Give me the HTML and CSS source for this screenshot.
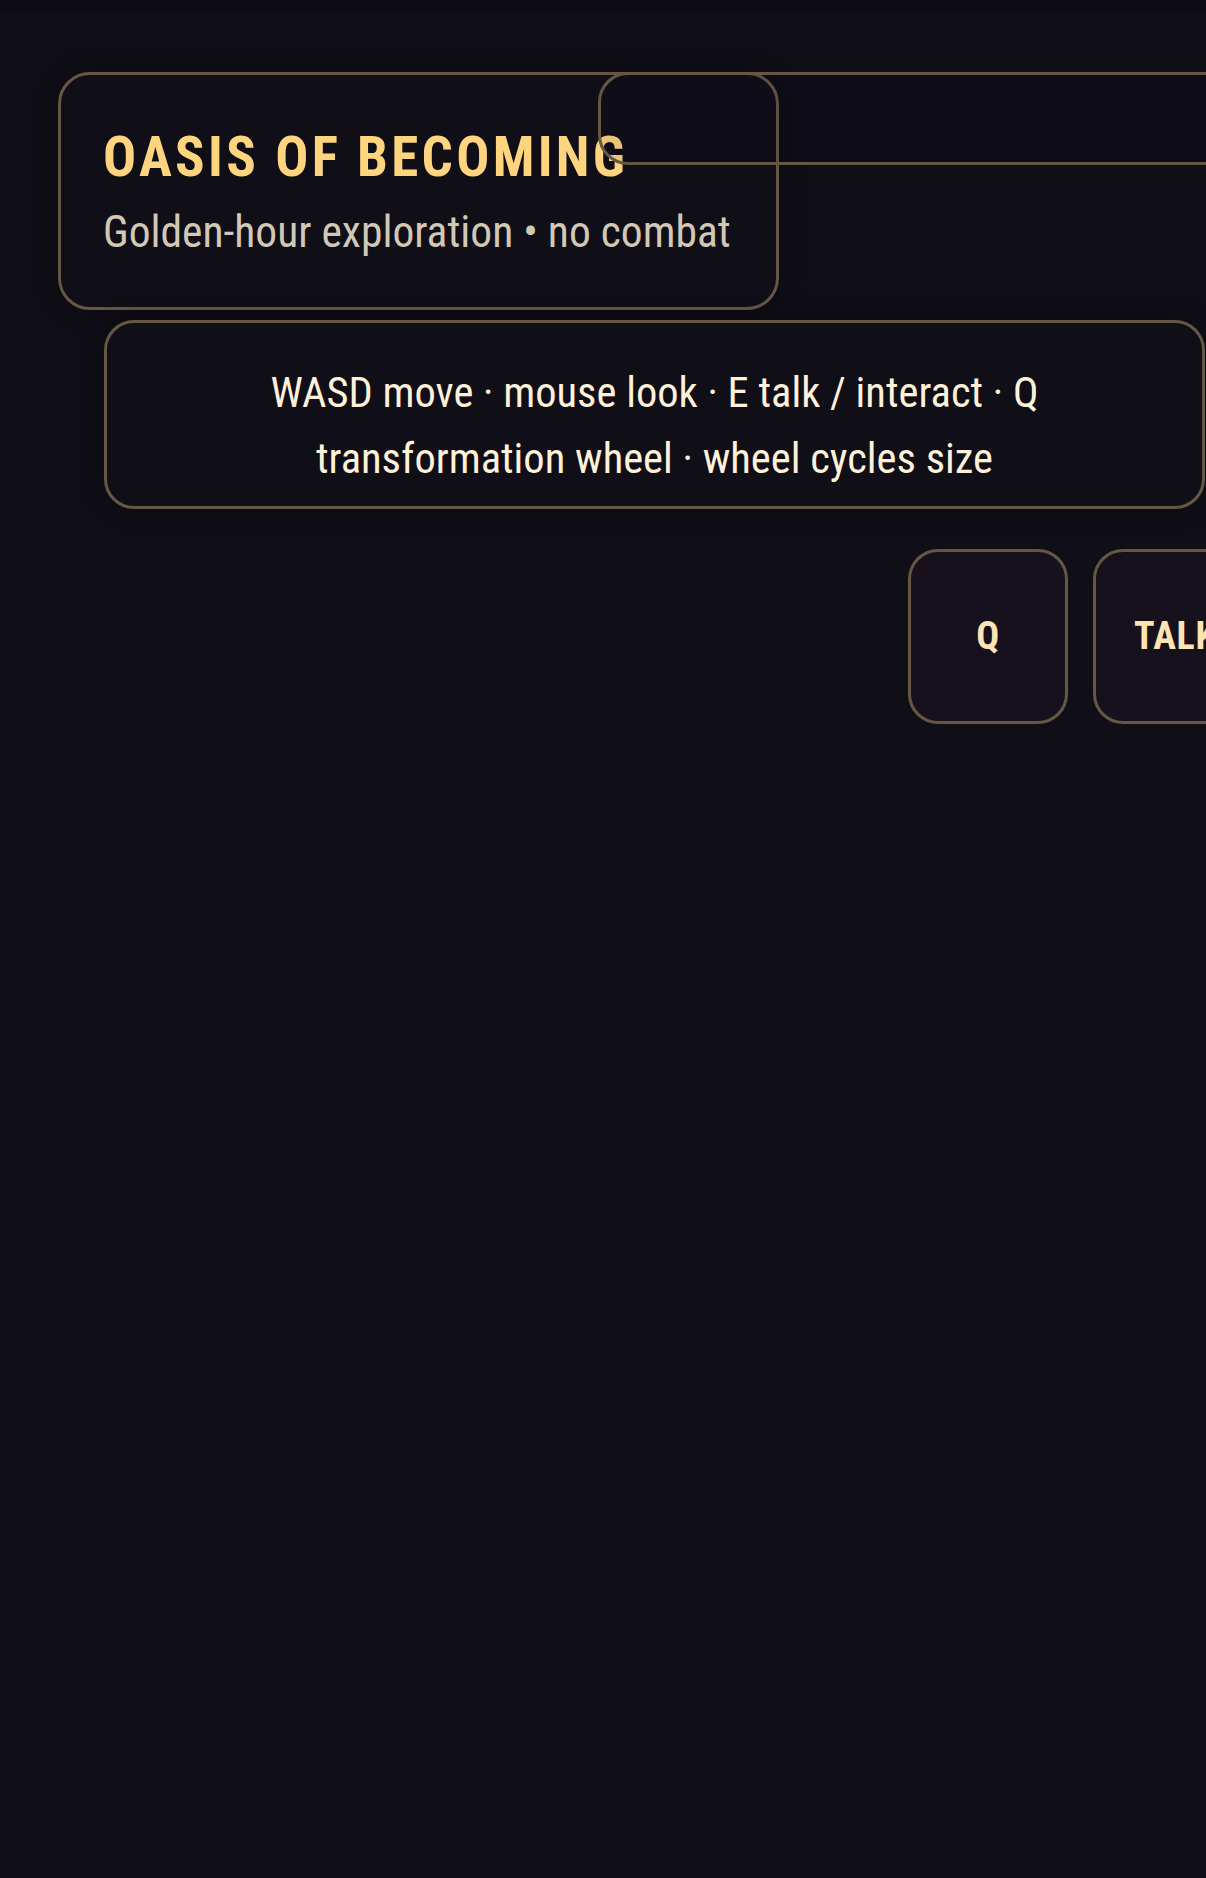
FILE: index.html
```html
<!DOCTYPE html>
<html lang="en">
<head>
<meta charset="utf-8">
<title>Oasis of Becoming</title>
<link rel="stylesheet" href="styles.css">
</head>
<body>
<div class="hud">
  <header class="title-card">
    <h1 class="title">OASIS OF BECOMING</h1>
    <p class="subtitle">Golden-hour exploration • no combat</p>
  </header>
  <div class="status-panel"></div>
  <section class="hint-box">
    <p class="hint-text">WASD move · mouse look · E talk / interact · Q transformation wheel · wheel cycles size</p>
  </section>
  <nav class="actions">
    <button class="action-btn key">Q</button>
    <button class="action-btn talk">TALK</button>
  </nav>
</div>
</body>
</html>
```
FILE: styles.css
```css
html, body {
  margin: 0;
  padding: 0;
}
body {
  width: 1206px;
  height: 1878px;
  overflow: hidden;
  background: linear-gradient(to bottom, #0b0a0e 0, #0f0d15 12px, #100e17 24px, #100e17 100%);
  font-family: "Roboto Condensed", Roboto, "Liberation Sans", sans-serif;
}
.hud {
  position: relative;
  padding-top: 72px;
  display: flex;
  flex-direction: column;
  align-items: flex-start;
}
.title-card {
  margin-left: 58px;
  border: 3px solid #655744;
  border-radius: 32px;
  padding: 55px 45px 52px 42px;
  background: #100e17;
  box-shadow: 0 0 24px rgba(0, 0, 0, 0.35);
}
.title {
  margin: 0;
  font-size: 55px;
  line-height: 55px;
  font-weight: 700;
  letter-spacing: 0.06em;
  color: #ffd47f;
  white-space: nowrap;
}
.subtitle {
  margin: 26px 0 0 0;
  font-size: 43.5px;
  line-height: 43.5px;
  font-weight: 400;
  color: #d2c8b6;
  white-space: nowrap;
}
.status-panel {
  position: absolute;
  left: 598px;
  top: 72px;
  right: -60px;
  height: 87px;
  border: 3px solid #655744;
  border-radius: 30px;
  background: rgba(16, 14, 23, 0.08);
}
.hint-box {
  box-sizing: border-box;
  margin: 10px 0 0 104px;
  width: 1101px;
  border: 3px solid #655744;
  border-radius: 30px;
  padding: 37px 40px 14px;
  background: #100e17;
  box-shadow: 0 0 24px rgba(0, 0, 0, 0.35);
}
.hint-text {
  margin: 0 auto;
  max-width: 900px;
  text-align: center;
  font-size: 42.5px;
  line-height: 66px;
  color: #fdf1da;
}
.actions {
  display: flex;
  gap: 25px;
  margin: 40px 0 0 908px;
}
.action-btn {
  box-sizing: border-box;
  height: 175px;
  min-width: 160px;
  padding: 0 38px;
  border: 3px solid #655744;
  border-radius: 30px;
  background: #17111d;
  color: #ffe4b3;
  font-family: "Roboto Condensed", Roboto, "Liberation Sans", sans-serif;
  font-size: 38px;
  font-weight: 700;
  letter-spacing: 0.02em;
  cursor: pointer;
}
.talk {
  min-width: 200px;
  text-align: left;
}
```
